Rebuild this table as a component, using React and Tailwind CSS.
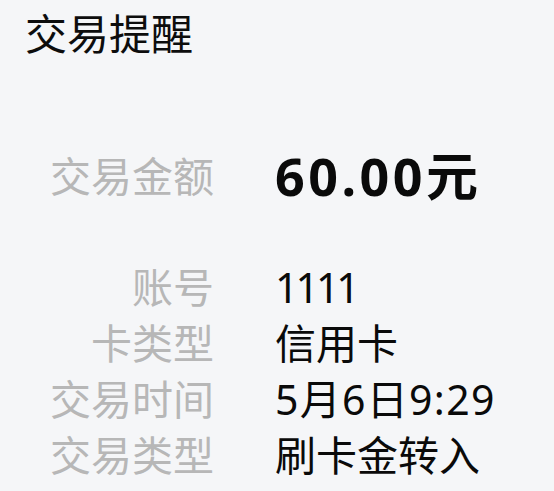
export default function App() {
  const rows = [
    ["账号", "1111", "tracking-[-3px]"],
    ["卡类型", "信用卡", ""],
    ["交易时间", "5月6日9:29", "tracking-[1.3px]"],
    ["交易类型", "刷卡金转入", ""],
  ];
  const font = { fontFamily: '"Noto Sans", "Noto Sans CJK SC", sans-serif' };
  return (
    <div className="w-[554px] h-[491px] bg-[#f5f6f8] overflow-hidden" style={font}>
      <div className="pl-[25px] pt-[6px] h-[62px] leading-[56px] text-[42px] text-[#0d0d0d]">交易提醒</div>
      <div className="mt-[84px] grid grid-cols-[214px_1fr] gap-x-[61px] h-[60px]">
        <div className="text-right text-[41px] leading-[60px] text-[#b7b7b7]">交易金额</div>
        <div className="text-[52px] leading-[60px] font-bold tracking-[3.5px] text-[#0a0a0a]">60.00元</div>
      </div>
      <div className="mt-[53px] grid grid-cols-[214px_1fr] gap-x-[61px]">
        {rows.map(([k, v, t]) => (
          <div key={k} className="contents">
            <div className="text-right text-[41px] leading-[56px] text-[#b7b7b7]">{k}</div>
            <div className={`text-[41px] leading-[56px] text-[#0a0a0a] whitespace-nowrap ${t}`}>{v}</div>
          </div>
        ))}
      </div>
    </div>
  );
}
